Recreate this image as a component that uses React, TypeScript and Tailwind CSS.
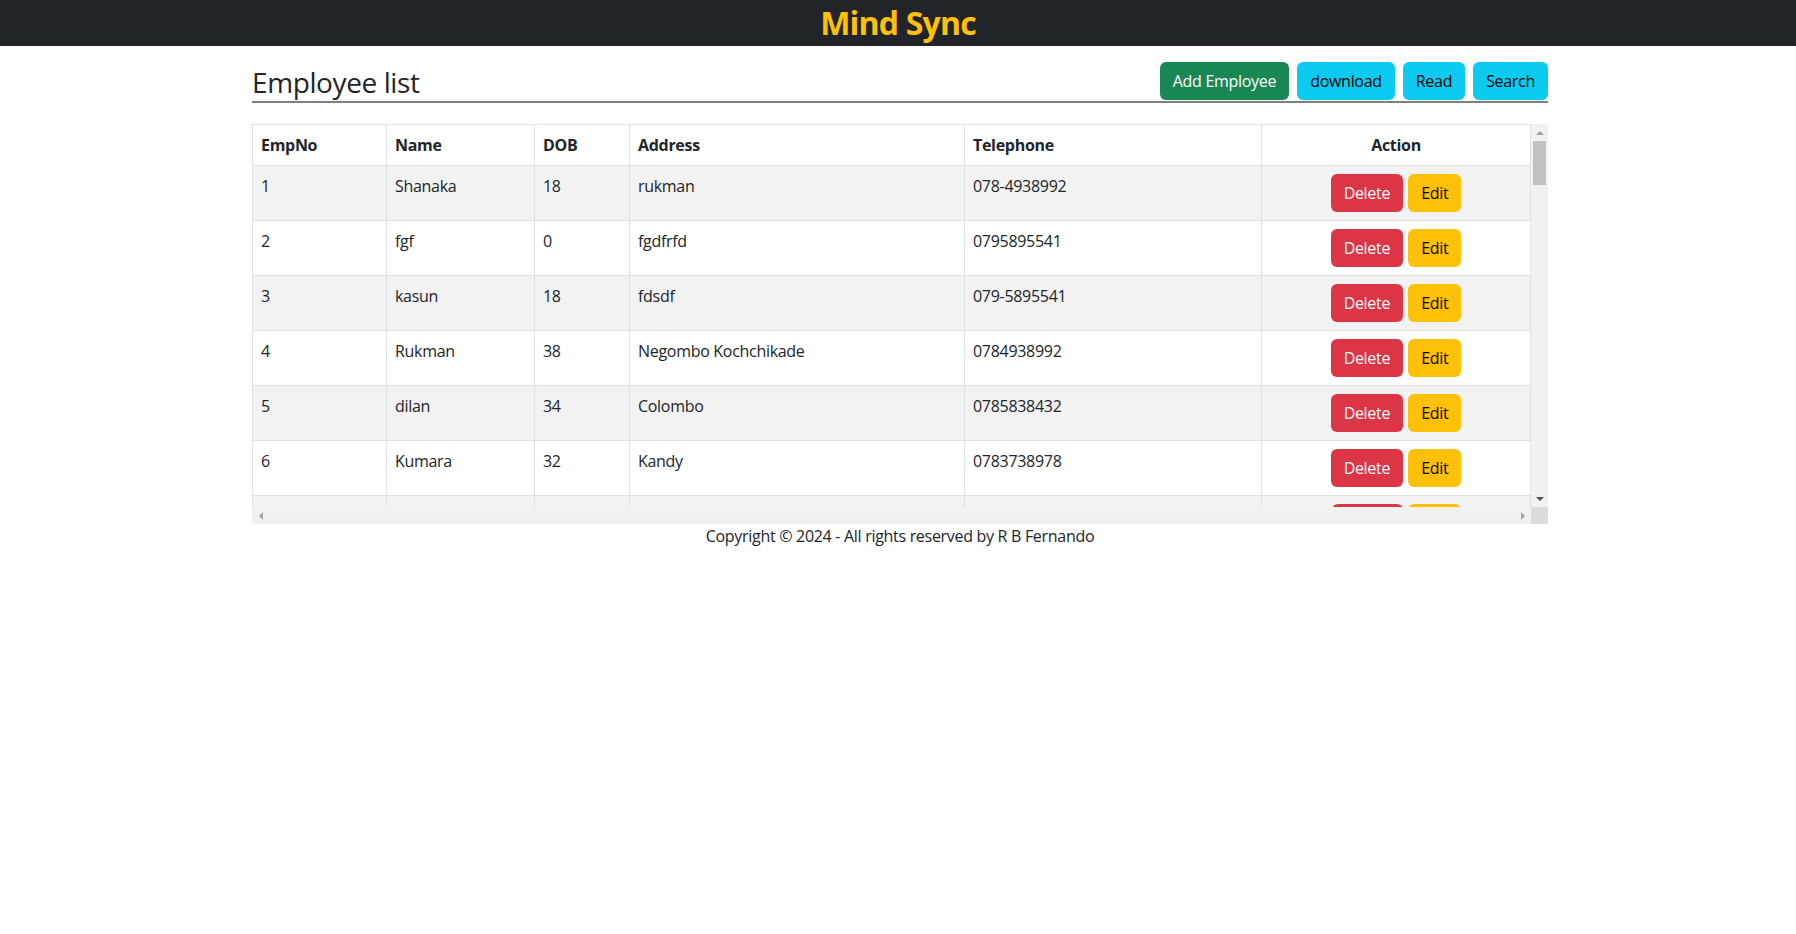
import React from 'react'

type Employee = {
  empNo: number
  name: string
  dob: string
  address: string
  telephone: string
}

const employees: Employee[] = [
  { empNo: 1, name: 'Shanaka', dob: '18', address: 'rukman', telephone: '078-4938992' },
  { empNo: 2, name: 'fgf', dob: '0', address: 'fgdfrfd', telephone: '0795895541' },
  { empNo: 3, name: 'kasun', dob: '18', address: 'fdsdf', telephone: '079-5895541' },
  { empNo: 4, name: 'Rukman', dob: '38', address: 'Negombo Kochchikade', telephone: '0784938992' },
  { empNo: 5, name: 'dilan', dob: '34', address: 'Colombo', telephone: '0785838432' },
  { empNo: 6, name: 'Kumara', dob: '32', address: 'Kandy', telephone: '0783738978' },
]

const cell = 'border border-[#dee2e6] p-2 align-top'

function Arrow({ dir, color }: { dir: 'up' | 'down' | 'left' | 'right'; color: string }) {
  const points = {
    up: '0,4 4,0 8,4',
    down: '0,0 8,0 4,4',
    left: '4,0 4,8 0,4',
    right: '0,0 4,4 0,8',
  }[dir]
  const vertical = dir === 'up' || dir === 'down'
  return (
    <div className="w-[17px] h-[17px] flex items-center justify-center shrink-0">
      <svg width={vertical ? 8 : 4} height={vertical ? 4 : 8} viewBox={vertical ? '0 0 8 4' : '0 0 4 8'}>
        <polygon points={points} fill={color} />
      </svg>
    </div>
  )
}

export default function App() {
  return (
    <div className="min-h-screen bg-white font-['Open_Sans',sans-serif] text-[#212529] text-base leading-6 tracking-[-0.3px]">
      <nav className="h-[46px] bg-[#212529] flex justify-center pt-[4px]">
        <h2 className="text-[32px] leading-[1.2] font-bold text-[#ffc107] tracking-[-0.8px]">Mind Sync</h2>
      </nav>

      <div className="w-[1300px] mx-auto pl-[4px]">
        <div className="mt-4 flex items-end justify-between border-b-2 border-[#808080] pb-[1px]">
          <h3 className="text-[28px] leading-[1.2] font-medium tracking-[-0.4px]">Employee list</h3>
          <div className="flex gap-2">
            <button className="px-3 py-1.5 rounded-md border border-transparent bg-[#198754] text-white">
              Add Employee
            </button>
            <button className="px-3 py-1.5 rounded-md border border-transparent bg-[#0dcaf0] text-black">
              download
            </button>
            <button className="px-3 py-1.5 rounded-md border border-transparent bg-[#0dcaf0] text-black">
              Read
            </button>
            <button className="px-3 py-1.5 rounded-md border border-transparent bg-[#0dcaf0] text-black">
              Search
            </button>
          </div>
        </div>

        {/* table box with its scrollbars */}
        <div className="mt-[21px] grid grid-cols-[1fr_17px] grid-rows-[383px_17px]">
          <div className="overflow-hidden">
            <table className="w-full border-collapse border border-[#dee2e6] text-left">
              <thead>
                <tr className="bg-white">
                  <th className={`w-[134px] ${cell} font-bold`}>EmpNo</th>
                  <th className={`w-[148px] ${cell} font-bold`}>Name</th>
                  <th className={`w-[95px] ${cell} font-bold`}>DOB</th>
                  <th className={`w-[335px] ${cell} font-bold`}>Address</th>
                  <th className={`w-[297px] ${cell} font-bold`}>Telephone</th>
                  <th className={`${cell} font-bold text-center`}>Action</th>
                </tr>
              </thead>
              <tbody>
                {employees.map((emp, i) => (
                  <tr key={emp.empNo} className={i % 2 === 0 ? 'bg-[#f2f2f2]' : 'bg-white'}>
                    <td className={cell}>{emp.empNo}</td>
                    <td className={cell}>{emp.name}</td>
                    <td className={cell}>{emp.dob}</td>
                    <td className={cell}>{emp.address}</td>
                    <td className={cell}>{emp.telephone}</td>
                    <td className={cell}>
                      <div className="flex justify-center gap-[5px]">
                        <button className="px-3 py-1.5 rounded-md border border-transparent bg-[#dc3545] text-white">
                          Delete
                        </button>
                        <button className="px-3 py-1.5 rounded-md border border-transparent bg-[#ffc107] text-black">
                          Edit
                        </button>
                      </div>
                    </td>
                  </tr>
                ))}
                {/* next row, scrolled under the bottom edge */}
                <tr className="bg-[#f2f2f2] h-[55px]">
                  <td className={cell} />
                  <td className={cell} />
                  <td className={cell} />
                  <td className={cell} />
                  <td className={cell} />
                  <td className={cell}>
                    <div className="flex justify-center gap-[5px]">
                      <div className="w-[71px] h-[38px] rounded-md bg-[#dc3545]" />
                      <div className="w-[53px] h-[38px] rounded-md bg-[#ffc107]" />
                    </div>
                  </td>
                </tr>
              </tbody>
            </table>
          </div>

          <div className="bg-[#f1f1f1] flex flex-col">
            <Arrow dir="up" color="#a3a3a3" />
            <div className="flex-1">
              <div className="mx-[2px] h-[44px] bg-[#c1c1c1]" />
            </div>
            <Arrow dir="down" color="#505050" />
          </div>

          <div className="bg-[#f1f1f1] flex justify-between">
            <Arrow dir="left" color="#a3a3a3" />
            <Arrow dir="right" color="#a3a3a3" />
          </div>
          <div className="bg-[#dcdcdc]" />
        </div>

        <p className="text-center">Copyright © 2024 - All rights reserved by R B Fernando</p>
      </div>
    </div>
  )
}
